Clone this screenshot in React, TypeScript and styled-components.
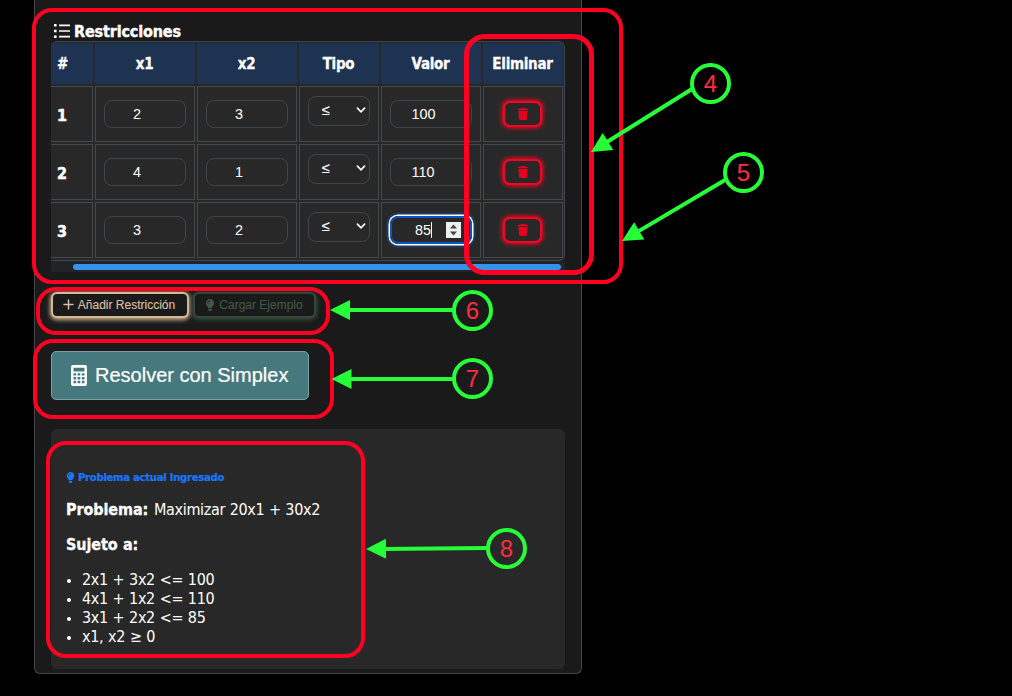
import React from "react";
import styled, { createGlobalStyle, css } from "styled-components";
import { FaLightbulb, FaTrash } from "react-icons/fa";

const GlobalStyle = createGlobalStyle`
  * { box-sizing: border-box; }
  body {
    margin: 0;
    background: #000;
    color: #fff;
    font-family: "DejaVu Sans Condensed", "DejaVu Sans", sans-serif;
    font-stretch: condensed;
    font-size: 16px;
    overflow: hidden;
  }
  b { -webkit-text-stroke: 0.3px currentColor; }
`;

const Page = styled.div`
  position: relative;
  width: 1012px;
  height: 696px;
  overflow: hidden;
  padding-left: 34px;
`;

const Card = styled.main`
  width: 548px;
  height: 674px;
  padding: 21px 16px 0;
  background: #1a1a1a;
  border: 1px solid #43474b;
  border-top: 0;
  border-radius: 0 0 6px 6px;
`;

const Heading = styled.h2`
  display: flex;
  align-items: center;
  gap: 4px;
  height: 20px;
  margin: 0;
  padding-left: 3px;
  font-size: 16px;
  font-weight: 700;
  letter-spacing: -0.15px;
  -webkit-text-stroke: 0.4px #fff;
`;

const TableScroller = styled.div`
  width: 514px;
  height: 231px;
  overflow: hidden;
  border-radius: 0 6px 0 0;
`;

const Table = styled.div`
  display: grid;
  grid-template-columns: 42px 100px 100px 80px 100px 80px;
  grid-template-rows: 41px 56px 56px 56px;
  gap: 2px;
  width: 514px;
  height: 220px;
  padding-top: 1px;
  background: #282828;
  border: 1px solid #3f454a;
  border-left: 0;
  border-radius: 6px 6px 6px 0;
`;

const HeadCell = styled.div<{ $first?: boolean }>`
  display: flex;
  align-items: center;
  justify-content: ${(p) => (p.$first ? "flex-start" : "center")};
  padding: 1px ${(p) => (p.$first ? "0" : "1px")} 0 ${(p) => (p.$first ? "6px" : "0")};
  background: #1e3352;
  font-size: 15px;
  font-weight: 700;
  letter-spacing: -0.28px;
  -webkit-text-stroke: 0.3px #fff;
`;

const Cell = styled.div<{ $first?: boolean }>`
  display: flex;
  align-items: center;
  justify-content: ${(p) => (p.$first ? "flex-start" : "center")};
  border: 1px solid #42484d;
  ${(p) => p.$first && css`
    border-left: 0;
    padding: 2px 0 0 6px;
    font-weight: 700;
    -webkit-text-stroke: 0.5px #fff;
  `}
`;

const field = css`
  display: flex;
  align-items: center;
  border: 1px solid #3d444a;
  border-radius: 8px;
  font-family: "Liberation Sans", Arial, sans-serif;
  font-size: 14.4px;
`;

const NumberField = styled.div<{ $wide?: boolean; $active?: boolean }>`
  ${field}
  width: 82px;
  height: 28px;
  padding-left: ${(p) => (p.$active ? "24px" : p.$wide ? "20.5px" : "28px")};
  ${(p) => p.$active && css`
    border-color: #0d55c0;
    box-shadow: inset 0 0 0 1px #0d55c0, 0 0 0 1.5px #fff, 0 0 0 3.5px #1d3a68;
  `}
`;

const Caret = styled.span`
  width: 1px;
  height: 16px;
  background: #fff;
`;

const Spinner = styled.span`
  display: flex;
  margin-left: 14px;
  background: #efefef;
`;

const SelectField = styled.div`
  ${field}
  justify-content: space-between;
  width: 62px;
  height: 30px;
  margin-bottom: 7px;
  padding: 0 2px 1px 13px;
  -webkit-text-stroke: 0.2px #fff;
`;

const DeleteButton = styled.button`
  display: flex;
  align-items: center;
  justify-content: center;
  width: 39px;
  height: 26px;
  margin-right: 1px;
  padding: 0 0 1px;
  color: #e5001e;
  background: #282828;
  border: 2px solid #f30525;
  border-radius: 7px;
  box-shadow: 0 0 4px 1px #ff0022;
`;

const ScrollTrack = styled.div`
  height: 11px;
  padding: 3px 4px 2px 22px;
  background: #202427;
`;

const ScrollThumb = styled.div`
  height: 6px;
  border-radius: 3px;
  background: #3592e8;
`;

const Actions = styled.div`
  display: flex;
  gap: 4px;
  height: 27px;
  margin-top: 20px;
`;

const ActionButton = styled.button<{ $tone: "sand" | "green" }>`
  display: flex;
  align-items: center;
  justify-content: center;
  gap: ${(p) => (p.$tone === "sand" ? "4px" : "3px")};
  width: ${(p) => (p.$tone === "sand" ? "138px" : "123px")};
  height: 26px;
  padding: 0 2px 1px 0;
  color: ${(p) => (p.$tone === "sand" ? "#d6bea0" : "#3f5845")};
  background: #1a1a1a;
  border: 2px solid ${(p) => (p.$tone === "sand" ? "#d3b995" : "#34483a")};
  border-radius: 6px;
  box-shadow: 0 1px 4px 1px ${(p) => (p.$tone === "sand" ? "#cdb18c" : "#354b3a")};
  font: 12px "Liberation Sans", Arial, sans-serif;
  -webkit-text-stroke: 0.15px currentColor;
  white-space: nowrap;
`;

const SolveButton = styled.button`
  display: flex;
  align-items: center;
  gap: 8px;
  width: 258px;
  height: 49px;
  margin-top: 32px;
  padding: 0 0 1px 19px;
  color: #fff;
  background: #45797e;
  border: 1px solid #7ba1a4;
  border-radius: 5px;
  font: 20px "Liberation Sans", Arial, sans-serif;
  -webkit-text-stroke: 0.2px #fff;
`;

const Result = styled.section`
  height: 240px;
  margin-top: 29px;
  padding: 40px 15px 0;
  background: #282828;
  border-radius: 6px;
`;

const ResultTitle = styled.h3`
  display: flex;
  align-items: center;
  gap: 2px;
  height: 16px;
  margin: 0 0 0 -1px;
  color: #1677ff;
  font-size: 11.2px;
  font-weight: 700;
  letter-spacing: -0.27px;
  -webkit-text-stroke: 0.2px #1677ff;
`;

const Line = styled.p`
  margin: 15px 0 0;
  line-height: 19px;
  white-space: nowrap;
  letter-spacing: -0.33px;
  word-spacing: 0.4px;

  & + & { margin-top: 16px; }
  b {
    margin-right: 1px;
    letter-spacing: -0.08px;
  }
`;

const ConstraintList = styled.ul`
  margin: 16px 0 0;
  padding-left: 16px;
  line-height: 19px;
  letter-spacing: -0.3px;
  word-spacing: 0.4px;

  li::marker { font-size: 14px; }
`;

const Annotations = styled.svg`
  position: absolute;
  inset: 0;
  pointer-events: none;
`;

const rows = [
  ["2", "3", "100"],
  ["4", "1", "110"],
  ["3", "2", "85"],
];

const frames = [
  { x: 34, y: 10, w: 587, h: 272, r: 18, s: 4 },
  { x: 466.5, y: 36.5, w: 125, h: 236, r: 18, s: 5 },
  { x: 38, y: 289, w: 290, h: 44, r: 18, s: 4 },
  { x: 35, y: 341, w: 297, h: 76, r: 18, s: 4 },
  { x: 48, y: 443, w: 315, h: 213, r: 18, s: 4 },
];

const markers = [
  { n: 4, x: 710.5, y: 83.5, from: [692, 89], to: [591, 152] },
  { n: 5, x: 743.5, y: 172.5, from: [725, 180], to: [622, 241] },
  { n: 6, x: 472.5, y: 310.5, from: [454, 310], to: [330, 310] },
  { n: 7, x: 472.5, y: 378.5, from: [454, 379], to: [331.5, 379] },
  { n: 8, x: 506.5, y: 548.5, from: [488, 548], to: [366, 549] },
];

function Marker({ n, x, y, from, to }: (typeof markers)[number]) {
  const dx = to[0] - from[0];
  const dy = to[1] - from[1];
  const length = Math.hypot(dx, dy);
  const angle = (Math.atan2(dy, dx) * 180) / Math.PI;
  return (
    <g>
      <g transform={`translate(${from[0]} ${from[1]}) rotate(${angle})`} fill="#26ff38">
        <rect y={-2} width={length - 15} height={4} />
        <path d={`M${length} 0l-20-10v20z`} />
      </g>
      <circle cx={x} cy={y} r={18.5} fill="none" stroke="#26ff38" strokeWidth={4} />
      <text x={x} y={y + 8.5} textAnchor="middle" fill="#ff2d3d" fontSize={24} fontFamily="Liberation Sans">{n}</text>
    </g>
  );
}

const ListIcon = () => (
  <svg width="16" height="14" viewBox="0 0 16 14" fill="#fff">
    <path d="M0 0h2.6v2.6H0zM0 5.7h2.6v2.6H0zM0 11.4h2.6V14H0zM5 .6h11v1.6H5zM5 6.2h11v1.6H5zM5 11.8h11v1.6H5z" />
  </svg>
);

const PlusIcon = () => (
  <svg width="11" height="11" viewBox="0 0 11 11" fill="none" stroke="currentColor" strokeWidth="1.5" strokeLinecap="round">
    <path d="M5.5 1v9M1 5.5h9" />
  </svg>
);

const CalculatorIcon = () => (
  <svg width="16" height="21" viewBox="0 0 16 21" fill="#fff" fillRule="evenodd">
    <path d="M2 0h12a2 2 0 0 1 2 2v17a2 2 0 0 1-2 2H2a2 2 0 0 1-2-2V2a2 2 0 0 1 2-2zM2.5 2.8v3.6h11V2.8zM2.5 8.2v2.4h2.7V8.2zM6.6 8.2v2.4h2.7V8.2zM10.8 8.2v2.4h2.7V8.2zM2.5 12v2.4h2.7V12zM6.6 12v2.4h2.7V12zM10.8 12v2.4h2.7V12zM2.5 15.8v2.4h2.7v-2.4zM6.6 15.8v2.4h2.7v-2.4zM10.8 15.8v2.4h2.7v-2.4z" />
  </svg>
);

const Chevron = () => (
  <svg width="12" height="12" viewBox="0 0 12 12" fill="none" stroke="#fff" strokeWidth="1.7" strokeLinecap="round">
    <path d="M2.4 4.2L6 7.8l3.6-3.6" />
  </svg>
);

export default function App() {
  return (
    <Page>
      <GlobalStyle />
      <Card>
        <Heading><ListIcon />Restricciones</Heading>
        <TableScroller>
          <Table>
            {["#", "x1", "x2", "Tipo", "Valor", "Eliminar"].map((h, i) => (
              <HeadCell key={h} $first={i === 0}>{h}</HeadCell>
            ))}
            {rows.map(([a, b, value], i) => (
              <React.Fragment key={i}>
                <Cell $first>{i + 1}</Cell>
                <Cell><NumberField>{a}</NumberField></Cell>
                <Cell><NumberField>{b}</NumberField></Cell>
                <Cell><SelectField>≤<Chevron /></SelectField></Cell>
                <Cell>
                  <NumberField $wide $active={i === 2}>
                    {value}
                    {i === 2 && (
                      <>
                        <Caret />
                        <Spinner><svg width="15" height="16" viewBox="0 0 15 16" fill="#454545"><path d="M4 6.5l3.5-4 3.5 4zM4 9.5h7l-3.5 4z" /></svg></Spinner>
                      </>
                    )}
                  </NumberField>
                </Cell>
                <Cell><DeleteButton><FaTrash size={12} /></DeleteButton></Cell>
              </React.Fragment>
            ))}
          </Table>
          <ScrollTrack><ScrollThumb /></ScrollTrack>
        </TableScroller>
        <Actions>
          <ActionButton $tone="sand"><PlusIcon />Añadir Restricción</ActionButton>
          <ActionButton $tone="green"><FaLightbulb size={12} />Cargar Ejemplo</ActionButton>
        </Actions>
        <SolveButton><CalculatorIcon />Resolver con Simplex</SolveButton>
        <Result>
          <ResultTitle><FaLightbulb size={11} />Problema actual Ingresado</ResultTitle>
          <Line><b>Problema:</b> Maximizar 20x1 + 30x2</Line>
          <Line><b>Sujeto a:</b></Line>
          <ConstraintList>
            <li>2x1 + 3x2 &lt;= 100</li>
            <li>4x1 + 1x2 &lt;= 110</li>
            <li>3x1 + 2x2 &lt;= 85</li>
            <li>x1, x2 ≥ 0</li>
          </ConstraintList>
        </Result>
      </Card>
      <Annotations width="1012" height="696" viewBox="0 0 1012 696">
        {frames.map((f, i) => (
          <rect key={i} x={f.x} y={f.y} width={f.w} height={f.h} rx={f.r} fill="none" stroke="#ff0022" strokeWidth={f.s} />
        ))}
        {markers.map((m) => <Marker key={m.n} {...m} />)}
      </Annotations>
    </Page>
  );
}
